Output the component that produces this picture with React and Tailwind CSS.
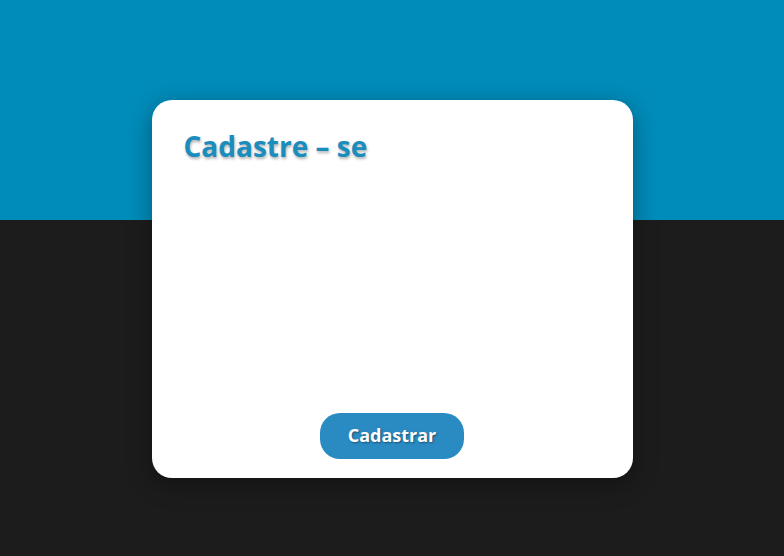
import React from 'react';

export default function App() {
    return (
        <div className="min-h-screen w-full bg-[linear-gradient(to_bottom,#008cba_0px,#008cba_220px,#1c1c1c_220px)] pt-[100px] font-['Open_Sans',sans-serif]">
            <div className="mx-auto flex h-[378px] w-[481px] flex-col rounded-[20px] bg-white px-[32px] pt-[27px] pb-[19px] shadow-[0_6px_24px_rgba(0,0,0,0.35)]">
                <h1 className="text-[28px] leading-[38px] font-bold text-[#1a8dbd] [text-shadow:1px_2px_3px_rgba(0,0,0,0.3)]">
                    Cadastre – se
                </h1>
                <div className="flex-1"></div>
                <div className="flex justify-center">
                    <button className="h-[46px] w-[144px] rounded-[20px] bg-[#2a8ac2] pb-[2px] text-[18px] font-bold text-white [text-shadow:1px_1px_2px_rgba(0,0,0,0.4)]">
                        Cadastrar
                    </button>
                </div>
            </div>
        </div>
    );
}
